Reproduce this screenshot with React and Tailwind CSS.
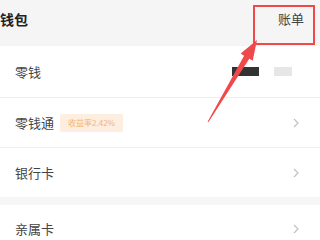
import React from 'react'

const font = { fontFamily: '"Noto Sans CJK SC", "Noto Sans", sans-serif' }

function Chevron() {
  return (
    <svg width="8" height="12" viewBox="0 0 8 12" className="mr-[20px]">
      <path d="M2 2 L6 6 L2 10" fill="none" stroke="#c4c4c4" strokeWidth="1.3" />
    </svg>
  )
}

export default function App() {
  return (
    <div className="relative w-[320px] h-[240px] overflow-hidden bg-white" style={font}>
      {/* header */}
      <div className="flex h-[46px] items-center justify-between bg-[#f5f5f5] pb-[8px]">
        <span className="text-[14px] font-bold text-[#222]">钱包</span>
        <span className="mr-[16px] text-[13px] text-[#444]">账单</span>
      </div>

      {/* 零钱 */}
      <div className="flex h-[52px] items-center justify-between border-b border-[#eeeeee] pl-[15px]">
        <span className="text-[13px] text-[#444]">零钱</span>
        <div className="mr-[28px] flex items-center gap-[15px]">
          <div className="h-[9px] w-[27px] bg-[#333]" />
          <div className="h-[9px] w-[18px] bg-[#e6e6e6]" />
        </div>
      </div>

      {/* 零钱通 */}
      <div className="flex h-[50px] items-center justify-between border-b border-[#eeeeee] pl-[15px]">
        <div className="flex items-center gap-[6px]">
          <span className="text-[13px] text-[#444]">零钱通</span>
          <span className="flex h-[18px] w-[63px] items-center justify-center rounded-[2px] bg-[#fdeedf] text-[8px] text-[#f2b37a]">收益率2.42%</span>
        </div>
        <Chevron />
      </div>

      {/* 银行卡 */}
      <div className="flex h-[49px] items-center justify-between pl-[15px]">
        <span className="text-[13px] text-[#444]">银行卡</span>
        <Chevron />
      </div>

      <div className="h-[8px] bg-[#f6f6f6]" />

      {/* 亲属卡 */}
      <div className="flex h-[48px] items-center justify-between pl-[15px]">
        <span className="text-[13px] text-[#444]">亲属卡</span>
        <Chevron />
      </div>

      {/* annotation box + arrow */}
      <div className="absolute left-[253px] top-[5px] h-[40px] w-[62px] border-2 border-[#f0494b]" />
      <svg className="absolute left-0 top-0" width="320" height="240">
        <polygon
          points="208.4,122.3 249.3,58.7 252.7,60.8 257,40 240.7,53.6 244.1,55.7 207.6,121.7"
          fill="#f0494b"
        />
      </svg>
    </div>
  )
}
